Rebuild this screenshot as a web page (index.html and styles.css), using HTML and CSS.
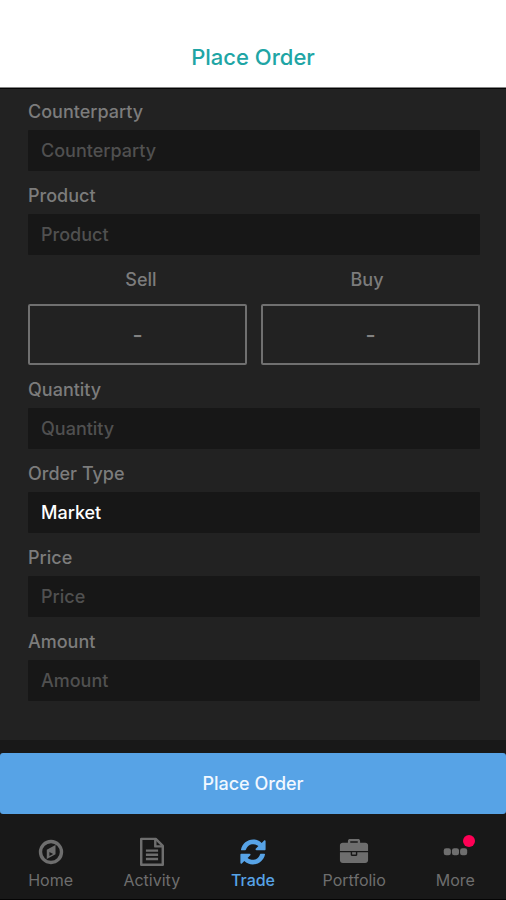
FILE: index.html
```html
<!DOCTYPE html>
<html lang="en">
<head>
<meta charset="utf-8">
<meta name="viewport" content="width=device-width, initial-scale=1">
<title>Place Order</title>
<link rel="stylesheet" href="styles.css">
</head>
<body>
<header class="header"><h1 class="title">Place Order</h1></header>
<form class="order">
  <div class="fields">
    <div class="field">
      <label for="counterparty">Counterparty</label>
      <input class="control" id="counterparty" type="text" placeholder="Counterparty">
    </div>
    <div class="field">
      <label for="product">Product</label>
      <input class="control" id="product" type="text" placeholder="Product">
    </div>
    <div class="sides">
      <div class="side-labels">
        <label for="sell">Sell</label>
        <label for="buy">Buy</label>
      </div>
      <div class="quotes">
        <button class="quote" id="sell" type="button">-</button>
        <button class="quote" id="buy" type="button">-</button>
      </div>
    </div>
    <div class="field">
      <label for="quantity">Quantity</label>
      <input class="control" id="quantity" type="text" placeholder="Quantity">
    </div>
    <div class="field">
      <label for="type">Order Type</label>
      <select class="control" id="type"><option>Market</option></select>
    </div>
    <div class="field">
      <label for="price">Price</label>
      <input class="control" id="price" type="text" placeholder="Price">
    </div>
    <div class="field">
      <label for="amount">Amount</label>
      <input class="control" id="amount" type="text" placeholder="Amount">
    </div>
  </div>
  <button class="submit" type="submit">Place Order</button>
</form>
<nav class="tabs">
  <a class="tab" href="#home">
    <svg class="icon" viewBox="0 0 32 32" aria-hidden="true">
      <circle cx="16" cy="16" r="11.2" fill="none" stroke="currentColor" stroke-width="3.6"/>
      <path fill="currentColor" fill-rule="evenodd" d="M20.800 8.500v10L11.500 23.500v-10zM14.300 16v4.200l4-2.200z"/>
    </svg>
    <span>Home</span>
  </a>
  <a class="tab" href="#activity">
    <svg class="icon" viewBox="0 0 32 32" aria-hidden="true">
      <g fill="none" stroke="currentColor" stroke-width="2.600" stroke-linejoin="round">
        <path d="M4.500 2h15.500l7.500 7.500v20H4.500z"/>
        <path d="M19.500 2v8H27.500"/>
        <path d="M9.500 14.500h13M9.500 19h13M9.500 23.500h13"/>
      </g>
    </svg>
    <span>Activity</span>
  </a>
  <a class="tab active" href="#trade" aria-current="page">
    <svg class="icon" viewBox="1 1 30 30" aria-hidden="true">
      <g fill="currentColor">
        <path id="sync" d="M4 13.500C5.200 7.800 10.200 3.500 16.200 3.500c3.200 0 6.200 1.300 8.500 3.500l2.400-2.400c.7-.6 1.500-.2 1.500.6v8c0 .6-.4 1-1 1h-8.200c-.9 0-1.300-.9-.7-1.500l2.700-2.700a7.700 7.700 0 0 0-12 2.600c-.4.900-.6 1.600-1.200 1.600H4.700c-.5 0-.8-.3-.7-.7z"/>
        <use href="#sync" transform="rotate(180 16 16)"/>
      </g>
    </svg>
    <span>Trade</span>
  </a>
  <a class="tab" href="#portfolio">
    <svg class="icon" viewBox="0 0 32 32" aria-hidden="true">
      <path fill="currentColor" fill-rule="evenodd" d="M9.500 6V4.200C9.500 2.700 10.500 2 11.800 2h8.400c1.300 0 2.300.7 2.300 2.200V6H28c1.700 0 3 1.200 3 2.800V15H1V8.800C1 7.200 2.300 6 4 6zM12 6h8V4.500h-8z"/>
      <path fill="currentColor" d="M1 16.200h11.500v2.800c0 .7.500 1.200 1.200 1.200h4.600c.7 0 1.200-.5 1.200-1.200v-2.800H31v8.600c0 1.700-1.300 3-3 3H4c-1.700 0-3-1.300-3-3z"/>
      <path fill="currentColor" d="M14 16.200h4v2.500h-4z"/>
    </svg>
    <span>Portfolio</span>
  </a>
  <a class="tab" href="#more">
    <span class="badged">
      <svg class="icon" viewBox="0 0 32 32" aria-hidden="true">
        <g fill="currentColor">
          <rect x="4" y="12" width="7.600" height="7.500" rx="2.500"/>
          <rect x="12.700" y="12" width="7.600" height="7.500" rx="2.500"/>
          <rect x="21.400" y="12" width="7.600" height="7.500" rx="2.500"/>
        </g>
      </svg>
      <span class="badge"></span>
    </span>
    <span>More</span>
  </a>
</nav>
</body>
</html>
```
FILE: styles.css
```css
* {
  box-sizing: border-box;
}

body {
  margin: 0;
  min-height: 100vh;
  display: flex;
  flex-direction: column;
  background: #181818;
  color: #7c7c7c;
  font: 18px/24px Inter, "Liberation Sans", sans-serif;
}

button,
input,
select {
  font: inherit;
}

.header {
  padding: 42px 16px 15px;
  border-bottom: 1px solid #858585;
  background: #fff;
  text-align: center;
}

.title {
  margin: 0;
  color: #20a5a5;
  font-size: 22px;
  font-weight: 500;
  line-height: 30px;
}

.order {
  flex: 1;
  display: flex;
  flex-direction: column;
  gap: 13px;
  font-weight: 500;
}

.fields {
  flex: 1;
  display: flex;
  flex-direction: column;
  gap: 13px;
  padding: 11px 26px 38px 28px;
  border-top: 1px solid #050505;
  background: #222;
}

.field {
  display: flex;
  flex-direction: column;
  gap: 6px;
}

.control {
  width: 100%;
  height: 41px;
  padding: 0 13px;
  border: 0;
  border-radius: 1px;
  appearance: none;
  background: #171717;
  color: #fff;
}

.control::placeholder {
  color: #505050;
  opacity: 1;
}

.sides {
  display: flex;
  flex-direction: column;
  gap: 12px;
}

.side-labels,
.quotes {
  display: grid;
  grid-template-columns: 1fr 1fr;
  text-align: center;
}

.quotes {
  gap: 14px;
}

.quote {
  height: 61px;
  border: 2px solid #707070;
  border-radius: 2px;
  background: transparent;
  color: #828282;
  font-size: 22px;
}

.submit {
  height: 61px;
  border: 0;
  border-radius: 3px;
  background: #57a3e6;
  color: #f2f8ff;
}

.tabs {
  display: grid;
  grid-template-columns: repeat(5, 1fr);
  padding: 23px 0 7px;
  border-bottom: 1px solid #050505;
}

.tab {
  display: flex;
  flex-direction: column;
  align-items: center;
  gap: 1px;
  color: #6e6e6e;
  font-size: 16px;
  text-decoration: none;
}

.active {
  color: #57a3e6;
  font-weight: 500;
}

.icon {
  display: block;
  width: 30px;
  height: 30px;
}

.badged {
  position: relative;
}

.badge {
  position: absolute;
  top: -2px;
  right: -5px;
  width: 12px;
  height: 12px;
  border-radius: 50%;
  background: #ff0055;
}
```
